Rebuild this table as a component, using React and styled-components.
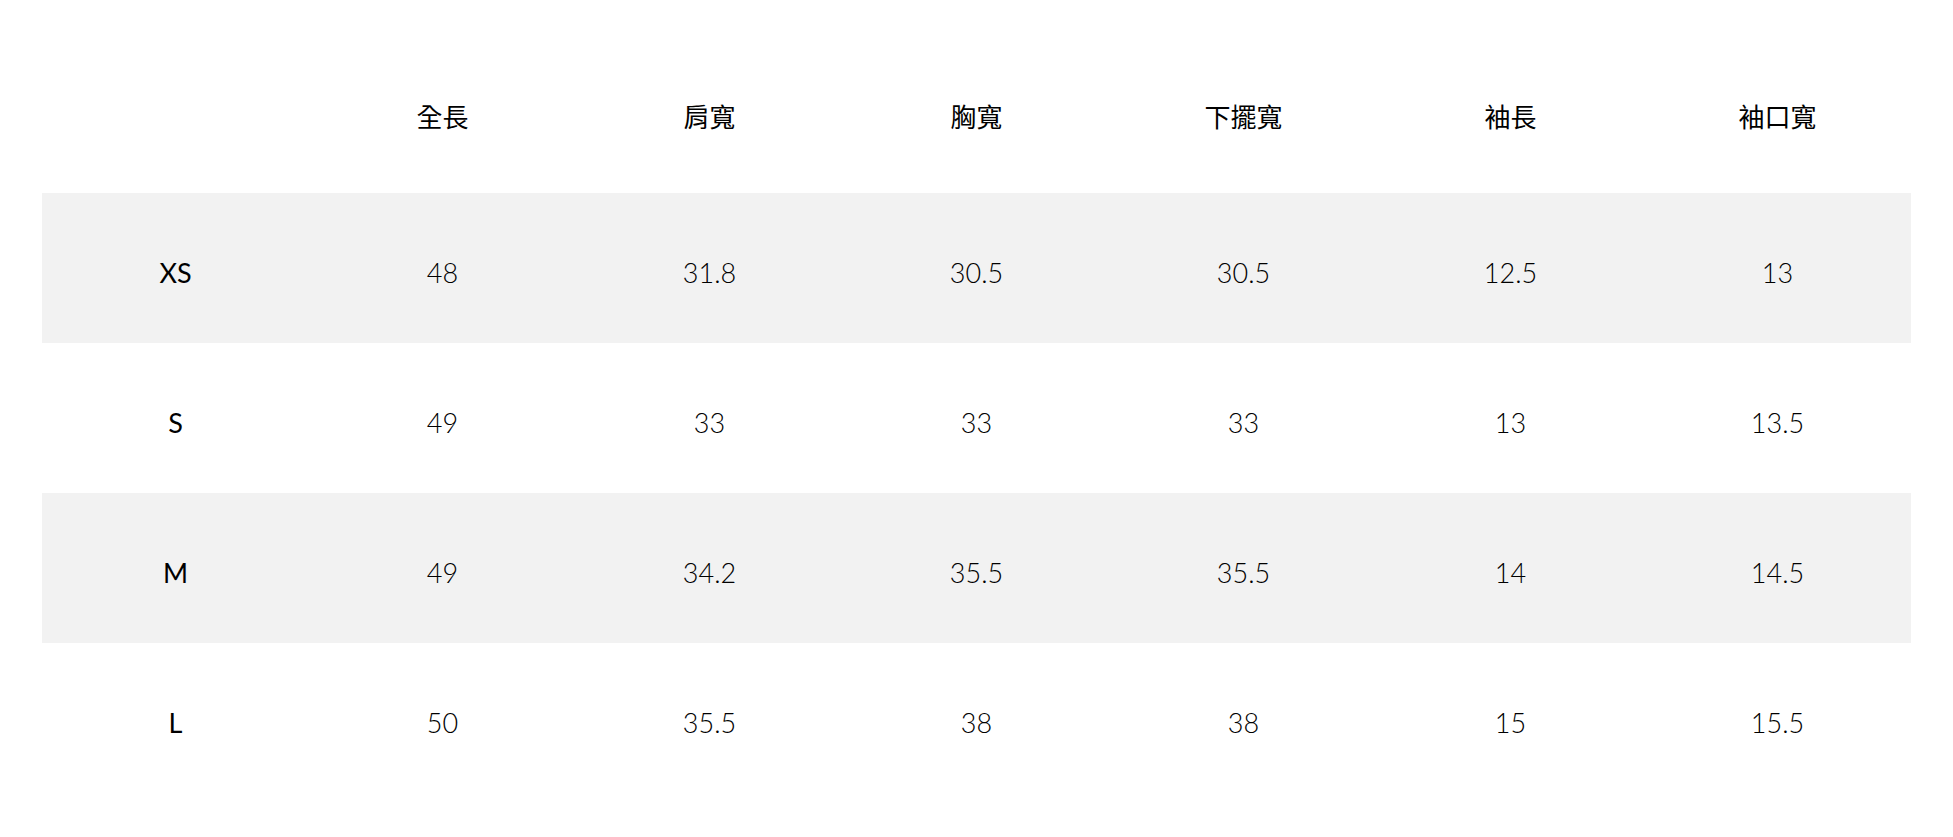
import React from "react";
import styled, { createGlobalStyle } from "styled-components";

const GlobalStyle = createGlobalStyle`
  body {
    margin: 0;
    background: #fff;
    font-family: "Lato", "Noto Sans CJK TC", sans-serif;
    color: #111;
  }
`;

const headers = ["全長", "肩寬", "胸寬", "下擺寬", "袖長", "袖口寬"];

const sizes = [
  { name: "XS", values: ["48", "31.8", "30.5", "30.5", "12.5", "13"] },
  { name: "S", values: ["49", "33", "33", "33", "13", "13.5"] },
  { name: "M", values: ["49", "34.2", "35.5", "35.5", "14", "14.5"] },
  { name: "L", values: ["50", "35.5", "38", "38", "15", "15.5"] },
];

const App = () => {
  return (
    <Page>
      <GlobalStyle />
      <Table>
        <thead>
          <Row>
            <HeadCell />
            {headers.map((h) => (
              <HeadCell key={h}>{h}</HeadCell>
            ))}
          </Row>
        </thead>
        <tbody>
          {sizes.map((s, i) => (
            <Row key={s.name} $shaded={i % 2 === 0}>
              <SizeCell>{s.name}</SizeCell>
              {s.values.map((v, j) => (
                <Cell key={j}>{v}</Cell>
              ))}
            </Row>
          ))}
        </tbody>
      </Table>
    </Page>
  );
};

export default App;

const Page = styled.div`
  padding: 43px 42px 44px;
`;

const Table = styled.table`
  width: 100%;
  border-collapse: collapse;
  table-layout: fixed;
`;

const Row = styled.tr`
  height: 150px;
  background: ${(p) => (p.$shaded ? "#f2f2f2" : "transparent")};
`;

const HeadCell = styled.th`
  padding: 0 0 5px;
  text-align: center;
  vertical-align: middle;
  font-family: "Noto Sans CJK TC", sans-serif;
  font-weight: 400;
  font-size: 26px;
  color: #000;
`;

const Cell = styled.td`
  padding: 8px 0 0;
  text-align: center;
  vertical-align: middle;
  font-family: "Lato", sans-serif;
  font-weight: 300;
  font-size: 27px;
  color: #000;
`;

const SizeCell = styled(Cell)`
  font-weight: 400;
`;
